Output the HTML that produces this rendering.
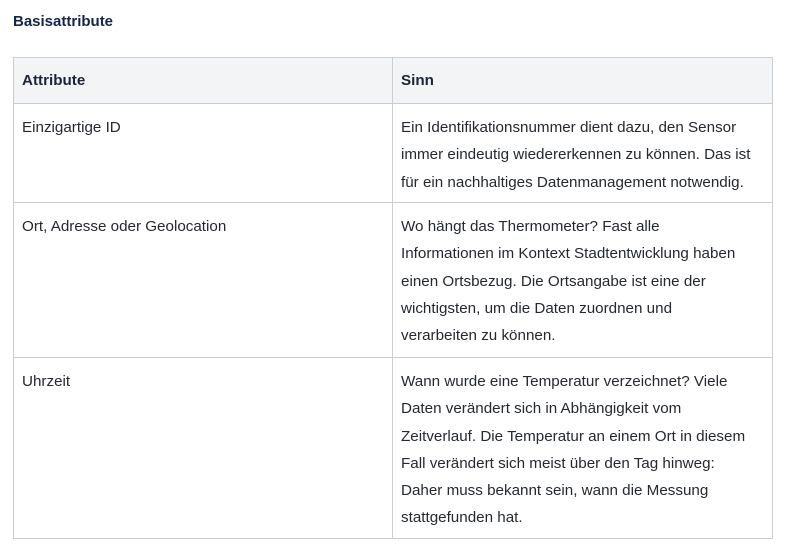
<!DOCTYPE html>
<html><head><meta charset="utf-8"><style>
html,body{margin:0;padding:0;background:#fff;}
body{width:794px;height:552px;overflow:hidden;font-family:"Liberation Sans",sans-serif;color:#24292f;}
h3{position:absolute;left:13px;top:13px;margin:0;font-size:15px;font-weight:bold;color:#14254a;}
table{position:absolute;left:13px;top:57px;border-collapse:collapse;font-size:15.2px;}
td,th{border:1px solid #c9cdd6;vertical-align:top;text-align:left;white-space:nowrap;padding:0 8px;}
th{background:#f3f4f6;height:45px;vertical-align:middle;font-weight:bold;color:#1b2536;}
td{line-height:27.3px;padding-top:10px;padding-bottom:4px;}
.c1{width:362px;}.c2{width:363px;}
</style></head><body>
<h3>Basisattribute</h3>
<table>
<tr><th class="c1">Attribute</th><th class="c2">Sinn</th></tr>
<tr style="height:99px"><td>Einzigartige ID</td><td>Ein Identifikationsnummer dient dazu, den Sensor<br>immer eindeutig wiedererkennen zu können. Das ist<br>für ein nachhaltiges Datenmanagement notwendig.</td></tr>
<tr style="height:155px"><td>Ort, Adresse oder Geolocation</td><td>Wo hängt das Thermometer? Fast alle<br>Informationen im Kontext Stadtentwicklung haben<br>einen Ortsbezug. Die Ortsangabe ist eine der<br>wichtigsten, um die Daten zuordnen und<br>verarbeiten zu können.</td></tr>
<tr style="height:181px"><td>Uhrzeit</td><td>Wann wurde eine Temperatur verzeichnet? Viele<br>Daten verändert sich in Abhängigkeit vom<br>Zeitverlauf. Die Temperatur an einem Ort in diesem<br>Fall verändert sich meist über den Tag hinweg:<br>Daher muss bekannt sein, wann die Messung<br>stattgefunden hat.</td></tr>
</table>
</body></html>
